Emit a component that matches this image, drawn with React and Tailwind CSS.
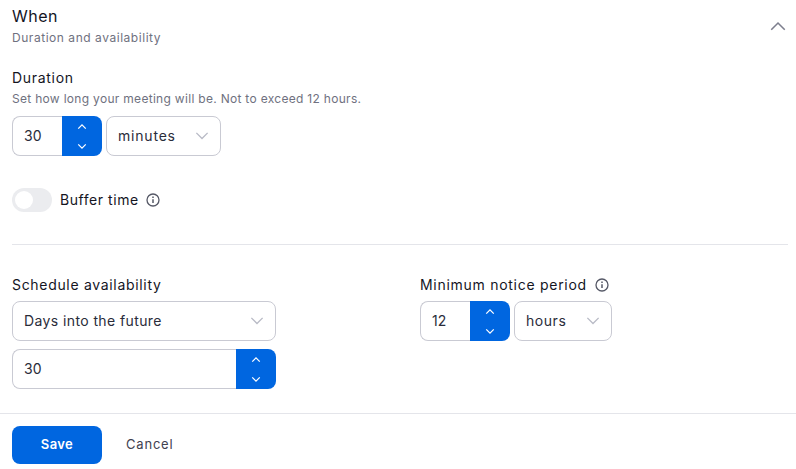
import React from "react";

const Chevron = ({ up, className, weight = "1.5" }) => (
  <svg className={className} viewBox="0 0 12 8" fill="none" stroke="currentColor" strokeWidth={weight}>
    <path d={up ? "M1.5 6.5 6 2l4.5 4.5" : "M1.5 1.5 6 6l4.5-4.5"} />
  </svg>
);

const Info = () => (
  <svg className="w-[14px] h-[14px] text-[#555866]" viewBox="0 0 14 14" fill="none" stroke="currentColor" strokeWidth="1.3">
    <circle cx="7" cy="7" r="6" />
    <path d="M7 6.3v3.6" strokeWidth="1.5" />
    <path d="M7 3.6v1.3" strokeWidth="1.5" />
  </svg>
);

const Stepper = ({ value, width }) => (
  <div className={`flex h-10 ${width}`}>
    <div className="flex-1 flex items-center pl-[11px] border border-r-0 border-[#c9cad3] rounded-l-lg text-sm text-[#2a2c3a] tracking-[0.1px]">
      {value}
    </div>
    <div className="w-10 bg-[#0066e0] rounded-r-lg flex flex-col items-center justify-center gap-[13px] text-white">
      <Chevron up className="w-[10px] h-[7px]" />
      <Chevron className="w-[10px] h-[7px]" />
    </div>
  </div>
);

const Select = ({ label, width, spacing }) => (
  <div className={`flex items-center justify-between h-10 pl-[11px] pr-[10px] border border-[#c9cad3] rounded-lg text-sm text-[#2a2c3a] ${spacing} ${width}`}>
    <span>{label}</span>
    <Chevron className="w-[16px] h-[10px] text-[#b9bbc6]" weight="1.1" />
  </div>
);

export default function App() {
  return (
    <div className="w-[796px] h-[469px] overflow-hidden bg-white font-['Inter','Liberation_Sans',sans-serif]">
      <div className="flex items-start justify-between pl-3 pr-[9px] pt-[6px]">
        <div>
          <h2 className="text-base leading-[20px] text-[#14151f] tracking-[0.5px]">When</h2>
          <p className="text-xs leading-4 mt-1 text-[#6f7180] tracking-[0.54px]">Duration and availability</p>
        </div>
        <Chevron up className="w-[18px] h-[12px] mt-[14px] text-[#7d7f8e]" weight="1.05" />
      </div>

      <div className="px-3 pt-[22px]">
        <div className="text-sm leading-5 text-[#14151f] tracking-[0.7px]">Duration</div>
        <p className="text-xs leading-4 mt-[3px] text-[#6f7180] tracking-[0.3px]">
          Set how long your meeting will be. Not to exceed 12 hours.
        </p>
        <div className="flex gap-1 mt-[9px]">
          <Stepper value="30" width="w-[90px]" />
          <Select label="minutes" width="w-[115px]" spacing="tracking-[0.8px]" />
        </div>

        <div className="flex items-center mt-8">
          <div className="w-10 h-6 rounded-full bg-[#ebecef] p-[3px]">
            <div className="w-[18px] h-[18px] rounded-full bg-white" />
          </div>
          <span className="ml-2 text-sm text-[#14151f] tracking-[0.55px]">Buffer time</span>
          <span className="ml-[7px]"><Info /></span>
        </div>
      </div>

      <div className="mt-8 ml-3 mr-2 border-t border-[#e4e5ea]" />

      <div className="flex px-3 pt-[30px]">
        <div className="w-[264px]">
          <div className="text-sm leading-5 text-[#14151f] tracking-[0.68px]">Schedule availability</div>
          <Select label="Days into the future" width="w-full mt-[6px]" spacing="tracking-[0.4px]" />
          <div className="mt-2">
            <Stepper value="30" width="w-full" />
          </div>
        </div>
        <div className="ml-[144px]">
          <div className="flex items-center text-sm leading-5 text-[#14151f] tracking-[0.72px]">
            Minimum notice period
            <span className="ml-2"><Info /></span>
          </div>
          <div className="flex gap-1 mt-[6px]">
            <Stepper value="12" width="w-[90px]" />
            <Select label="hours" width="w-[98px]" spacing="tracking-[0.55px]" />
          </div>
        </div>
      </div>

      <div className="mt-6 border-t border-[#e4e5ea] flex items-center px-3 pt-3">
        <button className="w-[90px] h-[38px] rounded-lg bg-[#0066e0] text-white text-[13px] tracking-[0.4px] font-semibold">Save</button>
        <button className="ml-6 text-[13px] text-[#3f4150] tracking-[0.8px]">Cancel</button>
      </div>
    </div>
  );
}
